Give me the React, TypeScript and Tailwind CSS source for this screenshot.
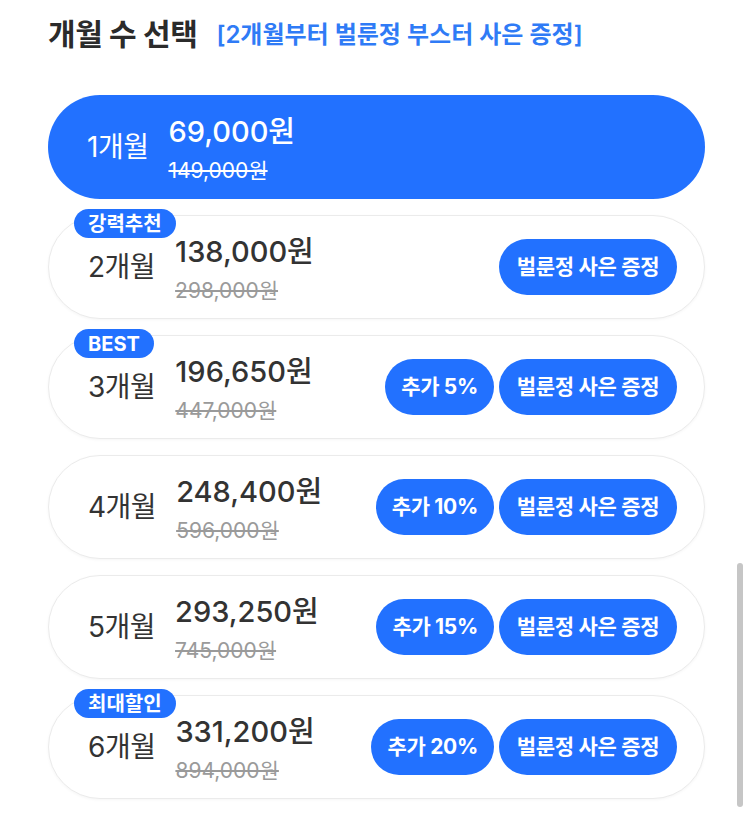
import React from 'react';

type Plan = {
  months: number;
  price: string;
  original: string;
  badge?: string;
  extra?: string;
  gift?: boolean;
};

const PLANS: Plan[] = [
  { months: 1, price: '69,000원', original: '149,000원' },
  { months: 2, price: '138,000원', original: '298,000원', badge: '강력추천', gift: true },
  { months: 3, price: '196,650원', original: '447,000원', badge: 'BEST', extra: '추가 5%', gift: true },
  { months: 4, price: '248,400원', original: '596,000원', extra: '추가 10%', gift: true },
  { months: 5, price: '293,250원', original: '745,000원', extra: '추가 15%', gift: true },
  { months: 6, price: '331,200원', original: '894,000원', badge: '최대할인', extra: '추가 20%', gift: true },
];

const font = { fontFamily: 'Inter, "Noto Sans CJK KR", sans-serif' };

export default function App() {
  const selected = 1;
  return (
    <div className="relative h-[835px] w-[750px] overflow-hidden bg-white" style={font}>
      <div className="flex items-center gap-[19px] pl-[48px] pt-[12px]">
        <h2 className="text-[30px] font-bold tracking-[-0.4px] text-[#2b2b2b]">개월 수 선택</h2>
        <span className="text-[24px] font-semibold text-[#2f7bf6]">[2개월부터 벌룬정 부스터 사은 증정]</span>
      </div>

      <div className="mt-[38px] flex flex-col gap-[16px] pl-[48px] pr-[45px]">
        {PLANS.map((plan) => (
          <PlanCard key={plan.months} plan={plan} active={plan.months === selected} />
        ))}
      </div>

      <div className="absolute right-[7px] top-[563px] h-[244px] w-[6px] rounded-full bg-[#c6c6c6]" />
    </div>
  );
}

function PlanCard({ plan, active }: { plan: Plan; active: boolean }) {
  return (
    <div
      className={`relative flex h-[104px] items-center rounded-full pl-[39px] pr-[27px] ${
        active ? 'bg-[#2271ff] text-white' : 'border border-[#ebebeb] bg-white text-[#333333] shadow-[0_1px_3px_rgba(0,0,0,0.04)]'
      }`}
    >
      {plan.badge && (
        <span className="absolute left-[25px] top-[-7px] flex h-[29px] items-center rounded-full bg-[#2271ff] px-[14px] text-[20px] font-bold text-white">
          {plan.badge}
        </span>
      )}
      <span className="text-[28px] tracking-[-0.5px]">{plan.months}개월</span>
      <div className="ml-[20px] flex flex-col pt-[5px]">
        <span className={`text-[29px] font-medium leading-[34px] ${active ? 'text-white' : 'text-[#333333]'}`}>{plan.price}</span>
        <span className={`mt-[9px] text-[21px] leading-[26px] line-through ${active ? 'text-white' : 'text-[#9a9a9a]'}`}>{plan.original}</span>
      </div>
      <div className="ml-auto flex gap-[5px]">
        {plan.extra && (
          <span className="flex h-[56px] items-center rounded-full bg-[#2271ff] px-[16px] text-[21px] font-bold tracking-[-0.3px] text-white">{plan.extra}</span>
        )}
        {plan.gift && (
          <span className="flex h-[56px] w-[178px] items-center justify-center rounded-full bg-[#2271ff] text-[21px] font-bold tracking-[-0.3px] text-white">벌룬정 사은 증정</span>
        )}
      </div>
    </div>
  );
}
